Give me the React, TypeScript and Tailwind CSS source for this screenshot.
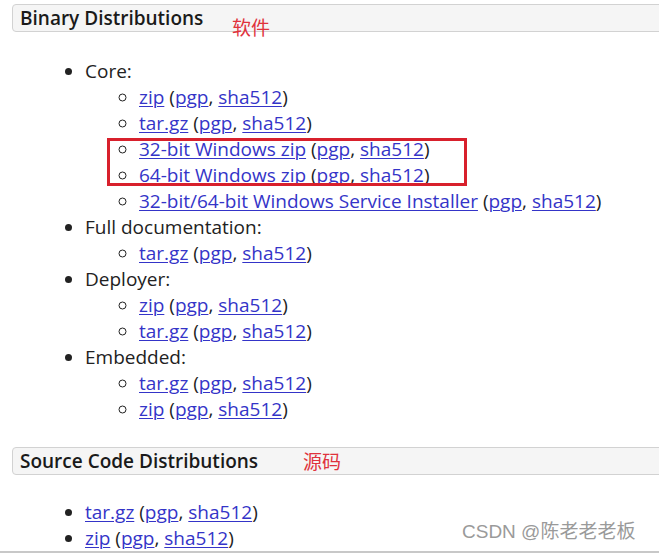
import React from 'react'

type Item = { label: string; sub?: string[] }

const binary: Item[] = [
  {
    label: 'Core:',
    sub: ['zip', 'tar.gz', '32-bit Windows zip', '64-bit Windows zip', '32-bit/64-bit Windows Service Installer'],
  },
  { label: 'Full documentation:', sub: ['tar.gz'] },
  { label: 'Deployer:', sub: ['zip', 'tar.gz'] },
  { label: 'Embedded:', sub: ['tar.gz', 'zip'] },
]

const A = ({ children }: { children: React.ReactNode }) => (
  <a href="#" className="text-[#3434c8] underline underline-offset-2 decoration-1">
    {children}
  </a>
)

// "name (pgp, sha512)" download line
const Dl = ({ name }: { name: string }) => (
  <>
    <A>{name}</A> (<A>pgp</A>, <A>sha512</A>)
  </>
)

const Header = ({ title }: { title: string }) => (
  <div className="ml-3 -mr-4 h-[28px] flex items-center pl-[7px] border border-[#d2d2d2] rounded-[4px] bg-[#f5f5f5] text-[19px] font-semibold text-[#1a1a1a]">
    {title}
  </div>
)

export default function App() {
  return (
    <div
      className="relative w-[659px] h-[553px] overflow-hidden bg-white text-[#222] border-b-2 border-[#c8c8c8]"
      style={{ fontFamily: '"Open Sans", "Noto Sans CJK SC", sans-serif' }}
    >
      <div className="pt-[4px]">
        <Header title="Binary Distributions" />
        <ul className="list-disc pl-[85px] mt-[26px] text-[19px] leading-[26px]">
          {binary.map((it) => (
            <li key={it.label}>
              {it.label}
              <ul className="list-[circle] pl-[54px]">
                {it.sub?.map((s) => (
                  <li key={s}>
                    <Dl name={s} />
                  </li>
                ))}
              </ul>
            </li>
          ))}
        </ul>
        <div className="mt-[25px]">
          <Header title="Source Code Distributions" />
        </div>
        <ul className="list-disc pl-[85px] mt-[24px] text-[19px] leading-[26px]">
          <li>
            <Dl name="tar.gz" />
          </li>
          <li>
            <Dl name="zip" />
          </li>
        </ul>
      </div>

      {/* annotations */}
      <span className="absolute left-[232px] top-[14px] text-[19px] text-[#e0323c]">软件</span>
      <span className="absolute left-[303px] top-[448px] text-[19px] text-[#e0323c]">源码</span>
      <div className="absolute left-[107px] top-[138px] w-[360px] h-[48px] border-[3px] border-[#d8202c]" />
      <span
        className="absolute left-[462px] top-[518px] text-[19px] text-[#9a9a9a]"
        style={{ fontFamily: '"Liberation Sans", "Noto Sans CJK SC", sans-serif' }}
      >
        CSDN @陈老老老板
      </span>
    </div>
  )
}
